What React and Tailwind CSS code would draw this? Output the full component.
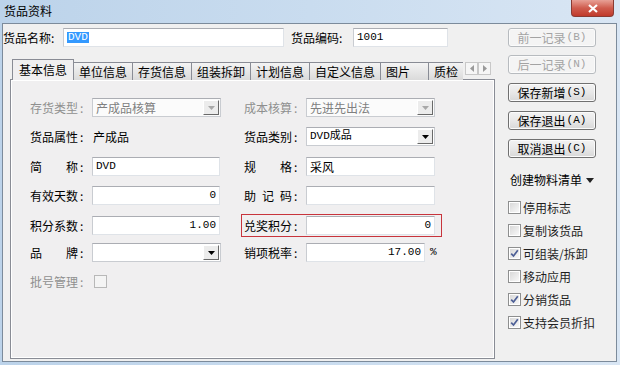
import React from "react";

const MONO = "font-['Liberation_Mono','Noto_Sans_CJK_SC',monospace] text-[11px]";

function Label({ text, grey }) {
  return (
    <div className={`w-[62px] shrink-0 flex items-center ${grey ? "text-[#8f8f8f]" : "text-black"}`}>
      <div className="w-[48px] flex justify-between">
        {text.split("").map((c, i) => (
          <span key={i}>{c}</span>
        ))}
      </div>
      <span className="ml-[2px]">:</span>
    </div>
  );
}

function Field({ children, right, className = "w-[128px]" }) {
  return (
    <div
      className={`h-[19px] shrink-0 bg-white border border-[#dfe3e8] border-t-[#abadb3] border-l-[#c9ccd1] flex items-center px-[3px] ${
        right ? "justify-end" : ""
      } ${className}`}
    >
      {children}
    </div>
  );
}

function Combo({ value, disabled, cjk }) {
  return (
    <div
      className={`w-[129px] h-[19px] shrink-0 border border-[#c9ccd1] border-t-[#abadb3] flex items-center justify-between pl-[3px] pr-[1px] ${
        disabled ? "bg-[#fbfbfb] text-[#808080]" : "bg-white text-black"
      }`}
    >
      <span className={cjk ? "" : MONO}>{value}</span>
      <div className="w-[16px] h-[15px] bg-[#ececec] border border-white border-r-[#696969] border-b-[#696969] flex items-center justify-center">
        <svg width="7" height="4" viewBox="0 0 7 4">
          <path d="M0 0h7L3.5 4z" fill={disabled ? "#a8a8a8" : "#000"} />
        </svg>
      </div>
    </div>
  );
}

function Btn({ children, disabled, className = "" }) {
  return (
    <div
      className={`w-[88px] h-[19px] rounded-[3px] border flex items-center justify-center shadow-[inset_0_0_0_1px_#fbfbfb] ${
        disabled
          ? "border-[#b7bbbf] bg-[#f4f4f4] text-[#a3a3a3]"
          : "border-[#707070] bg-gradient-to-b from-[#f3f3f3] via-[#e8e8e8] to-[#d8d8d8] text-black"
      } ${className}`}
    >
      {children}
    </div>
  );
}

function Check({ checked, label }) {
  return (
    <div className="h-[23px] flex items-center">
      <div className="w-[13px] h-[13px] border border-[#8e8f8f] p-[1px] bg-white">
        <div className="w-full h-full bg-gradient-to-br from-[#d9d9d9] to-[#f8f8f8] flex items-center justify-center">
          {checked && (
            <svg width="9" height="9" viewBox="0 0 9 9">
              <path d="M1.2 4.6L3.5 7L7.8 1.2" stroke="#4d5f96" strokeWidth="1.7" fill="none" />
            </svg>
          )}
        </div>
      </div>
      <span className="ml-[2px] text-[#1e1e1e]">{label}</span>
    </div>
  );
}

const tabs = ["单位信息", "存货信息", "组装拆卸", "计划信息", "自定义信息"];

export default function App() {
  return (
    <div className="w-[620px] h-[365px] flex flex-col bg-gradient-to-r from-[#bcd3ea] via-[#c9dcef] to-[#d9e6f4] font-['Noto_Sans_CJK_SC','Noto_Sans',sans-serif] text-[12px] leading-none text-black overflow-hidden">
      {/* Title bar */}
      <div className="h-[23px] shrink-0 flex items-start justify-between">
        <span className="ml-[4px] mt-[5px] text-[12px]">货品资料</span>
        <div className="w-[43px] h-[17px] mr-[6px] rounded-b-[4px] border border-t-0 border-[#8a3b33] bg-gradient-to-b from-[#e7a096] via-[#cf5c4e] to-[#c0392b] flex items-center justify-center">
          <svg width="10" height="9" viewBox="0 0 10 9">
            <path d="M1 1L9 8M9 1L1 8" stroke="#fff" strokeWidth="2.2" />
          </svg>
        </div>
      </div>

      {/* Window body */}
      <div className="flex-1 ml-[2px] mr-[3px] mb-[3px] border border-[#7c8b9b] bg-[#f0f0f0] flex">
        {/* Left side */}
        <div className="w-[492px] shrink-0 flex flex-col">
          <div className="mt-[4px] h-[19px] flex items-center">
            <span className="w-[60px] shrink-0">货品名称:</span>
            <Field className="w-[221px]">
              <span className={`${MONO} bg-[#3399ff] text-white px-[1px]`}>DVD</span>
            </Field>
            <span className="ml-[7px] w-[62px] shrink-0">货品编码:</span>
            <Field className="w-[95px]">
              <span className={MONO}>1001</span>
            </Field>
          </div>

          {/* Tabs */}
          <div className="mt-[12px] ml-[9px] h-[21px] flex items-end relative z-10">
            <div className="w-[451px] h-[21px] flex items-end overflow-hidden">
              <div className="h-[21px] w-[62px] shrink-0 px-[6px] bg-[#f0eff0] border border-b-0 border-[#898c95] flex items-center justify-center">
                基本信息
              </div>
              {tabs.map((t) => (
                <div
                  key={t}
                  className="h-[18px] shrink-0 px-[5px] -ml-px border border-b-0 border-[#898c95] bg-gradient-to-b from-[#f4f4f4] to-[#dadada] first:ml-0 flex items-center"
                >
                  {t}
                </div>
              ))}
              <div className="h-[18px] w-[48px] shrink-0 px-[5px] border border-l-0 border-b-0 border-[#898c95] bg-gradient-to-b from-[#f4f4f4] to-[#dadada] flex items-center">
                图片
              </div>
              <div className="h-[18px] w-[40px] shrink-0 pl-[5px] border-t border-[#898c95] bg-gradient-to-b from-[#f4f4f4] to-[#dadada] flex items-center">
                质检
              </div>
            </div>
            <div className="flex mb-[5px] ml-[2px]">
              {["M4 0L0 3.5L4 7z", "M0 0L4 3.5L0 7z"].map((d) => (
                <div
                  key={d}
                  className="w-[13px] h-[13px] bg-[#f6f6f6] border border-[#c8c8c8] flex items-center justify-center"
                >
                  <svg width="4" height="7" viewBox="0 0 4 7">
                    <path d={d} fill="#9a9a9a" />
                  </svg>
                </div>
              ))}
            </div>
          </div>

          {/* Tab panel */}
          <div className="-mt-px ml-[7px] w-[485px] h-[280px] border border-[#898c95] bg-[#f0eff0] shadow-[inset_1px_1px_0_#fff,inset_-1px_-1px_0_#fff] pt-[18px] pl-[19px] flex flex-col">
            <div className="h-[19px] flex items-center">
              <div className="w-[214px] flex items-center">
                <Label text="存货类型" grey />
                <Combo value="产成品核算" disabled cjk />
              </div>
              <Label text="成本核算" grey />
              <Combo value="先进先出法" disabled cjk />
            </div>

            <div className="mt-[10px] h-[19px] flex items-center">
              <div className="w-[214px] flex items-center">
                <Label text="货品属性" />
                <span className="ml-[1px]">产成品</span>
              </div>
              <Label text="货品类别" />
              <Combo value="DVD成品" />
            </div>

            <div className="mt-[11px] h-[19px] flex items-center">
              <div className="w-[214px] flex items-center">
                <Label text="简称" />
                <Field>
                  <span className={MONO}>DVD</span>
                </Field>
              </div>
              <Label text="规格" />
              <Field className="w-[129px]">
                <span>采风</span>
              </Field>
            </div>

            <div className="mt-[10px] h-[19px] flex items-center">
              <div className="w-[214px] flex items-center">
                <Label text="有效天数" />
                <Field right>
                  <span className={MONO}>0</span>
                </Field>
              </div>
              <Label text="助记码" />
              <Field className="w-[129px]" />
            </div>

            <div className="mt-[11px] h-[19px] flex items-center">
              <div className="w-[214px] flex items-center">
                <Label text="积分系数" />
                <Field right>
                  <span className={MONO}>1.00</span>
                </Field>
              </div>
              <div className="-ml-[3px] h-[23px] pl-[2px] pr-[6px] border border-[#c8343c] flex items-center">
                <Label text="兑奖积分" />
                <Field right className="w-[129px]">
                  <span className={MONO}>0</span>
                </Field>
              </div>
            </div>

            <div className="mt-[8px] h-[19px] flex items-center">
              <div className="w-[214px] flex items-center">
                <Label text="品牌" />
                <Combo value="" />
              </div>
              <Label text="销项税率" />
              <Field right className="w-[119px]">
                <span className={MONO}>17.00</span>
              </Field>
              <span className={`${MONO} ml-[5px]`}>%</span>
            </div>

            <div className="mt-[10px] h-[19px] flex items-center">
              <Label text="批号管理" grey />
              <div className="w-[13px] h-[13px] ml-[2px] border border-[#b8b8b8] bg-[#f4f4f4]" />
            </div>
          </div>
        </div>

        {/* Right side */}
        <div className="pl-[13px] flex flex-col">
          <Btn disabled className="mt-[4px]">
            前一记录<span className={`${MONO} ml-[1px]`}>(B)</span>
          </Btn>
          <Btn disabled className="mt-[8px]">
            后一记录<span className={`${MONO} ml-[1px]`}>(N)</span>
          </Btn>
          <Btn className="mt-[9px]">
            保存新增<span className={`${MONO} ml-[1px]`}>(S)</span>
          </Btn>
          <Btn className="mt-[9px]">
            保存退出<span className={`${MONO} ml-[1px]`}>(A)</span>
          </Btn>
          <Btn className="mt-[9px]">
            取消退出<span className={`${MONO} ml-[1px]`}>(C)</span>
          </Btn>
          <div className="mt-[14px] ml-[2px] h-[16px] flex items-center">
            <span>创建物料清单</span>
            <svg width="8" height="5" viewBox="0 0 8 5" className="ml-[4px]">
              <path d="M0 0h8L4 5z" fill="#222" />
            </svg>
          </div>
          <div className="mt-[8px] flex flex-col">
            <Check label="停用标志" />
            <Check label="复制该货品" />
            <Check checked label="可组装/拆卸" />
            <Check label="移动应用" />
            <Check checked label="分销货品" />
            <Check checked label="支持会员折扣" />
          </div>
        </div>
      </div>
    </div>
  );
}
